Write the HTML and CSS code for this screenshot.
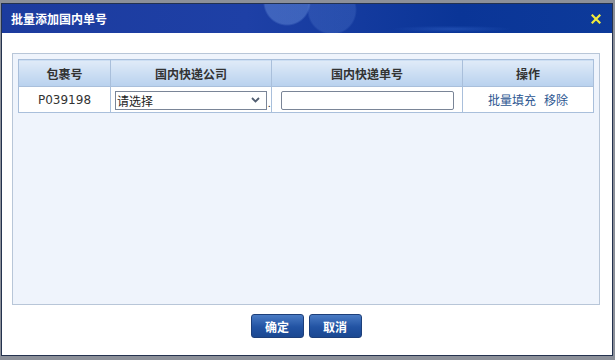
FILE: index.html
```html
<!DOCTYPE html>
<html lang="zh-CN">
<head>
    <meta charset="UTF-8">
    <title>批量添加国内单号</title>
    <link rel="stylesheet" href="styles.css">
</head>
<body>
    <div class="dialog">
        <div class="dialog-title">
            <span class="title-text">批量添加国内单号</span>
            <svg class="close" width="10" height="10" viewBox="0 0 10 10">
                <path d="M1.5 1.5 L8.5 8.5 M8.5 1.5 L1.5 8.5" stroke="#f2ec3c" stroke-width="2.2" stroke-linecap="square"/>
            </svg>
        </div>
        <div class="dialog-body">
            <div class="panel">
                <table class="grid">
                    <thead>
                        <tr>
                            <th class="col-pkg">包裹号</th>
                            <th class="col-company">国内快递公司</th>
                            <th class="col-no">国内快递单号</th>
                            <th class="col-op">操作</th>
                        </tr>
                    </thead>
                    <tbody>
                        <tr>
                            <td class="pkg-no">P039198</td>
                            <td class="cell-left">
                                <select class="sel">
                                    <option>请选择</option>
                                </select><span class="dot">.</span>
                            </td>
                            <td class="cell-left"><input type="text" class="txt"></td>
                            <td><a href="#" class="link">批量填充</a><a href="#" class="link">移除</a></td>
                        </tr>
                    </tbody>
                </table>
            </div>
            <div class="buttons">
                <button class="btn">确定</button>
                <button class="btn">取消</button>
            </div>
        </div>
    </div>
</body>
</html>
```

FILE: styles.css
```css
body {
    margin: 0;
    padding: 3px 2px 0 1px;
    background-color: #8c9099;
    font-family: "Noto Sans CJK SC", "DejaVu Sans", sans-serif;
    font-size: 12px;
    color: #222;
}

.dialog {
    width: 610px;
    height: 351px;
    border: 1px solid #24324f;
    background-color: #fff;
    display: flex;
    flex-direction: column;
}

.dialog-title {
    height: 29px;
    display: flex;
    align-items: center;
    justify-content: space-between;
    padding: 0 11px 0 9px;
    background:
        radial-gradient(circle at 285px -2px, rgba(120, 160, 230, 0.38) 0, rgba(120, 160, 230, 0.38) 22px, transparent 24px),
        radial-gradient(circle at 330px 6px, rgba(110, 150, 225, 0.22) 0, rgba(110, 150, 225, 0.22) 23px, transparent 25px),
        radial-gradient(ellipse at 450px 25px, rgba(60, 110, 210, 0.4), transparent 60px),
        linear-gradient(to right, #1c3b9e 0%, #1e40a6 40%, #0a3597 75%, #0d3a9a 100%);
}

.title-text {
    color: #fff;
    font-weight: bold;
    font-size: 12px;
}

.close {
    display: block;
    margin-top: 1px;
}

.dialog-body {
    flex: 1;
    padding: 20px 12px 0 10px;
}

.panel {
    height: 240px;
    border: 1px solid #b8c6d8;
    background-color: #eff4fc;
    padding: 5px;
}

.grid {
    width: 576px;
    border-collapse: collapse;
    background-color: #fff;
}

.grid th,
.grid td {
    border: 1px solid #a9bfdb;
    text-align: center;
    padding: 0;
}

.grid th {
    height: 26px;
    font-weight: bold;
    color: #333;
    background: linear-gradient(to bottom, #e0ebf8, #b8d1ee);
}

.grid td {
    height: 25px;
}

.col-pkg { width: 91px; }
.col-company { width: 160px; }
.col-no { width: 190px; }

.pkg-no {
    font-family: "DejaVu Sans", sans-serif;
    color: #333;
}

.cell-left {
    text-align: left !important;
    padding-left: 4px !important;
    white-space: nowrap;
}

.sel {
    appearance: none;
    -webkit-appearance: none;
    width: 152px;
    height: 19px;
    border: 1px solid #7a8597;
    border-radius: 0;
    font-family: inherit;
    font-size: 12px;
    color: #222;
    padding: 0 1px;
    background: #fff url("data:image/svg+xml,%3Csvg xmlns='http://www.w3.org/2000/svg' width='9' height='6'%3E%3Cpath d='M1 1 L4.5 4.5 L8 1' fill='none' stroke='%23505d70' stroke-width='1.8'/%3E%3C/svg%3E") no-repeat right 6px center;
    vertical-align: middle;
}

.dot {
    vertical-align: bottom;
    margin-left: 1px;
    font-size: 9px;
}

.txt {
    width: 173px;
    height: 19px;
    box-sizing: border-box;
    border: 1px solid #7a8597;
    border-radius: 2px;
    margin-left: 5px;
    vertical-align: middle;
}

.link {
    color: #2c5691;
    text-decoration: none;
    margin: 0 4px;
}

.buttons {
    display: flex;
    justify-content: center;
    gap: 5px;
    padding-top: 9px;
}

.btn {
    width: 53px;
    height: 24px;
    border: 1px solid #1d3f7a;
    border-radius: 3px;
    background: linear-gradient(to bottom, #4a7bc4, #2253a3 55%, #1b4891);
    color: #fff;
    font-family: inherit;
    font-weight: bold;
    font-size: 12px;
    padding: 0;
}
```
